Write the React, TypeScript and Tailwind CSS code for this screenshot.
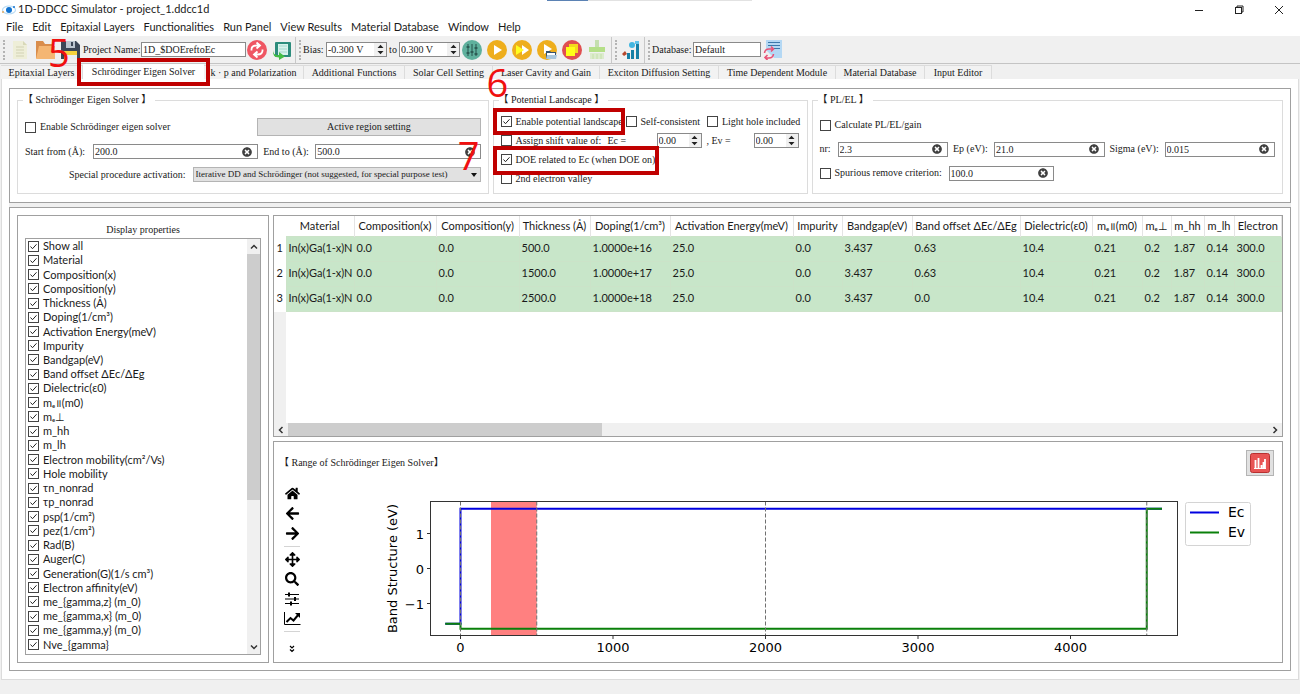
import { ReactNode } from "react";
import {
  FaArrowLeft,
  FaArrowRight,
  FaArrowsAlt,
  FaHome,
  FaSearch,
  FaTimesCircle,
} from "react-icons/fa";

const serif = "font-['Liberation_Serif','Noto_Sans_CJK_TC',serif]";

const menus = [
  "File",
  "Edit",
  "Epitaxial Layers",
  "Functionalities",
  "Run Panel",
  "View Results",
  "Material Database",
  "Window",
  "Help",
];

const properties = [
  "Show all",
  "Material",
  "Composition(x)",
  "Composition(y)",
  "Thickness (Å)",
  "Doping(1/cm³)",
  "Activation Energy(meV)",
  "Impurity",
  "Bandgap(eV)",
  "Band offset ΔEc/ΔEg",
  "Dielectric(ε0)",
  "mₑ॥(m0)",
  "mₑ⊥",
  "m_hh",
  "m_lh",
  "Electron mobility(cm²/Vs)",
  "Hole mobility",
  "τn_nonrad",
  "τp_nonrad",
  "psp(1/cm²)",
  "pez(1/cm²)",
  "Rad(B)",
  "Auger(C)",
  "Generation(G)(1/s cm³)",
  "Electron affinity(eV)",
  "me_{gamma,z} (m_0)",
  "me_{gamma,x} (m_0)",
  "me_{gamma,y} (m_0)",
  "Nve_{gamma}",
];

const columns = [
  { label: "Material", width: "w-[68px]" },
  { label: "Composition(x)", width: "w-[82px]" },
  { label: "Composition(y)", width: "w-[83px]" },
  { label: "Thickness (Å)", width: "w-[71px]" },
  { label: "Doping(1/cm³)", width: "w-[80px]" },
  { label: "Activation Energy(meV)", width: "w-[123px]" },
  { label: "Impurity", width: "w-[49px]" },
  { label: "Bandgap(eV)", width: "w-[70px]" },
  { label: "Band offset ΔEc/ΔEg", width: "w-[108px]" },
  { label: "Dielectric(ε0)", width: "w-[72px]" },
  { label: "mₑ॥(m0)", width: "w-[50px]" },
  { label: "mₑ⊥", width: "w-[29px]" },
  { label: "m_hh", width: "w-[33px]" },
  { label: "m_lh", width: "w-[30px]" },
  { label: "Electron", width: "" },
];

const rows = [
  ["In(x)Ga(1-x)N", "0.0", "0.0", "500.0", "1.0000e+16", "25.0", "0.0", "3.437", "0.63", "10.4", "0.21", "0.2", "1.87", "0.14", "300.0"],
  ["In(x)Ga(1-x)N", "0.0", "0.0", "1500.0", "1.0000e+17", "25.0", "0.0", "3.437", "0.63", "10.4", "0.21", "0.2", "1.87", "0.14", "300.0"],
  ["In(x)Ga(1-x)N", "0.0", "0.0", "2500.0", "1.0000e+18", "25.0", "0.0", "3.437", "0.0", "10.4", "0.21", "0.2", "1.87", "0.14", "300.0"],
];

function Check({ label, checked = false }: { label: string; checked?: boolean }) {
  return (
    <label className="flex items-center gap-1 whitespace-nowrap">
      <span className="relative flex h-[11px] w-[11px] shrink-0">
        <input
          type="checkbox"
          defaultChecked={checked}
          className="peer h-[11px] w-[11px] appearance-none border border-[#444] bg-white"
        />
        <svg
          viewBox="0 0 11 11"
          className="pointer-events-none absolute inset-0 hidden peer-checked:block"
          fill="none"
          stroke="#222"
        >
          <path d="M2.5 5.5l2 2.2 4-4.4" />
        </svg>
      </span>
      {label}
    </label>
  );
}

function ClearField({ id, value, className }: { id: string; value: string; className: string }) {
  return (
    <span className={`flex h-[15px] items-center border border-[#8a8a8a] bg-white pr-[5px] ${className}`}>
      <input id={id} defaultValue={value} className="h-full w-full min-w-0 pl-px outline-none" />
      <button aria-label="Clear" className="shrink-0 text-[#404040]">
        <FaTimesCircle size={10} />
      </button>
    </span>
  );
}

function Spin({ value, label, className }: { value: string; label: string; className: string }) {
  return (
    <span className={`flex h-[15px] border border-[#8a8a8a] bg-white ${className}`}>
      <input aria-label={label} defaultValue={value} className="h-full w-full min-w-0 pl-px outline-none" />
      <button aria-label={`Step ${label}`} className="flex w-3 shrink-0 items-center justify-center bg-[#f0f0f0]">
        <svg width="7" height="11" viewBox="0 0 7 11" fill="#222">
          <path d="M0.5 4L3.5 0.8 6.5 4zM0.5 7L3.5 10.2 6.5 7z" />
        </svg>
      </button>
    </span>
  );
}

function Grip() {
  return <span className="h-5 w-0 shrink-0 border-l-2 border-dotted border-[#b4b4b4]" />;
}

function Divider() {
  return <span className="h-[26px] w-px shrink-0 bg-[#c8c8c8]" />;
}

function ToolButton({ label, children }: { label: string; children: ReactNode }) {
  return (
    <button aria-label={label} className="h-5 w-5 shrink-0">
      <svg width="20" height="20" viewBox="0 0 20 20">
        {children}
      </svg>
    </button>
  );
}

function Mark({ className }: { className: string }) {
  return <span className={`pointer-events-none absolute z-10 border-4 border-[#c00000] ${className}`} />;
}

function Digit({ value, className }: { value: string; className: string }) {
  return (
    <span
      className={`pointer-events-none absolute z-20 font-['Open_Sans',sans-serif] text-[38px] leading-[38px] text-[#f01010] ${className}`}
    >
      {value}
    </span>
  );
}

function TitleBar() {
  return (
    <header className="relative flex h-[19px] items-center bg-white pl-px text-[11px] text-[#222]">
      <svg width="16" height="14" viewBox="0 0 16 14" className="mr-px">
        <ellipse cx="8" cy="7" rx="6.5" ry="4" fill="none" stroke="#b9dcf5" strokeWidth="1.2" />
        <circle cx="8" cy="7" r="3" fill="#1273d0" />
        <circle cx="13" cy="4" r="1" fill="#1273d0" />
        <circle cx="2" cy="9" r="1" fill="#e0a860" />
      </svg>
      <h1>1D-DDCC Simulator - project_1.ddcc1d</h1>
      <span className="absolute left-[547px] top-0 flex">
        <span className="h-px w-[41px] bg-[#5b82b4]" />
        <span className="h-px w-[164px] bg-[#e2e2e2]" />
      </span>
      <div className="ml-auto flex gap-[30px] pr-4">
        <button aria-label="Minimize">
          <svg width="10" height="10" viewBox="0 0 10 10" fill="none" stroke="#222">
            <path d="M1 5.5h8" />
          </svg>
        </button>
        <button aria-label="Restore">
          <svg width="10" height="10" viewBox="0 0 10 10" fill="none" stroke="#222">
            <rect x="1.5" y="2.5" width="6" height="6" />
            <path d="M3 2.5v-1.5h6v6h-1.5" />
          </svg>
        </button>
        <button aria-label="Close">
          <svg width="10" height="10" viewBox="0 0 10 10" fill="none" stroke="#222">
            <path d="M1 1l8 8M9 1l-8 8" />
          </svg>
        </button>
      </div>
    </header>
  );
}

function Toolbar() {
  return (
    <div className={`flex h-7 items-center border-b border-[#c4c4c4] pl-[3px] text-[10px] ${serif}`}>
      <Grip />
      <div className="ml-[5px] flex items-center gap-[5px]">
        <ToolButton label="New project">
          <path d="M3 1h10l4 4v14H3z" fill="#eeeed8" />
          <path d="M13 1v4h4z" fill="#d8d8b8" />
          <path d="M6 7h8M6 10h8M6 13h8M6 16h8" stroke="#d2d2b4" />
        </ToolButton>
        <ToolButton label="Open project">
          <path d="M1 1h7l2 3h9v14H1z" fill="#d98d4c" />
          <path d="M4 6h16v13H1z" fill="#f4b673" />
        </ToolButton>
        <ToolButton label="Save project">
          <path d="M1 1h15l4 4v14H1z" fill="#3c4656" />
          <path d="M6 1h9v7H6z" fill="#bcc5cf" />
          <path d="M11 2h2v4h-2z" fill="#3c4656" />
          <path d="M4 11h13v8H4z" fill="#f5d23d" />
          <path d="M4 15h13v4H4z" fill="#e9eef2" />
        </ToolButton>
      </div>
      <label htmlFor="project-name" className="ml-[3px] w-[58px] whitespace-nowrap">
        Project Name:
      </label>
      <input
        id="project-name"
        defaultValue="1D_$DOEreftoEc"
        className="h-[15px] w-[105px] border border-[#8a8a8a] bg-white pl-px"
      />
      <div className="ml-px flex items-center gap-[5px]">
        <ToolButton label="Reload">
          <circle cx="10" cy="10" r="10" fill="#ef5663" />
          <g fill="none" stroke="#fff" strokeWidth="1.8">
            <path d="M4.5 10.5q-0.5-5 5-5h3M9.5 2.5l3.5 3-3.5 3" />
            <path d="M15.5 9.5q0.5 5-5 5h-3M10.5 17.5l-3.5-3 3.5-3" />
          </g>
        </ToolButton>
        <ToolButton label="Restore layout">
          <rect x="3" y="2" width="16" height="15" rx="1" fill="#2c8c7c" />
          <rect x="6" y="4" width="10" height="11" fill="#d7f2ec" />
          <path d="M7 6h8M7 9h8M7 12h8" stroke="#a5d8ce" />
          <path d="M1 10q0 6 6 5v-3l6 4.5-6 3.5v-2.5q-7 0-6-7.5z" fill="#45bd45" />
        </ToolButton>
      </div>
      <div className="ml-[3px] flex items-center gap-[3px]">
        <Divider />
        <Grip />
      </div>
      <span className="w-[25px] pl-[2px]">Bias:</span>
      <Spin label="bias from" value="-0.300 V" className="w-[61px]" />
      <span className="w-3 text-center">to</span>
      <Spin label="bias to" value="0.300 V" className="w-[61px]" />
      <div className="ml-[2px] flex items-center gap-[5px]">
        <ToolButton label="Bias settings">
          <circle cx="10" cy="10" r="10" fill="#5fb09d" />
          <path d="M6 4v12M10 4v12M14 4v12" stroke="#27504b" />
          <path d="M4.5 7h3M8.5 12h3M12.5 8h3M4.5 13h3M12.5 14h3" stroke="#27504b" strokeWidth="1.5" />
        </ToolButton>
        <ToolButton label="Run">
          <circle cx="10" cy="10" r="10" fill="#eeae1c" />
          <path d="M7 5l8 5-8 5z" fill="#fff" />
        </ToolButton>
        <ToolButton label="Run all">
          <circle cx="10" cy="10" r="10" fill="#eeae1c" />
          <path d="M10 5l7 5-7 5z" fill="#fff" />
          <path d="M4 5l8 5-8 5z" fill="#ffff20" />
        </ToolButton>
        <ToolButton label="Run from file">
          <circle cx="10" cy="10" r="10" fill="#eeae1c" />
          <path d="M7 4l8 5-8 5z" fill="#fff" />
          <path d="M9 11h4l1 1h5v7H9z" fill="#35536f" />
          <path d="M10 13h8v2h-8z" fill="#fff" />
          <path d="M10 15h10l-1 4H9z" fill="#a9c6dc" />
        </ToolButton>
        <ToolButton label="Stop">
          <circle cx="10" cy="10" r="10" fill="#e04f50" />
          <path d="M7 4h9v9H7z" fill="#f4d91c" />
          <path d="M4 7h9v9H4z" fill="#ffff18" />
        </ToolButton>
        <ToolButton label="Clean">
          <path d="M8 0h4v8H8z" fill="#c5dfae" />
          <path d="M2 7h16v5H2z" fill="#b5df88" />
          <path d="M3 13h14v6H3z" fill="#dcebcd" />
          <path d="M6 14v5M10 14v5M14 14v5" stroke="#c4e0a8" />
        </ToolButton>
      </div>
      <div className="ml-1 flex items-center gap-[3px]">
        <Divider />
        <Grip />
      </div>
      <div className="ml-1 flex items-center gap-[3px]">
        <ToolButton label="Plot results">
          <path d="M6 13h3v6H6zM10 10h3v9h-3zM15 4h3v15h-3z" fill="#1680a6" />
          <circle cx="11" cy="5" r="3" fill="#42b6e0" />
          <path d="M1 14l3-3 2 3-3 2z" fill="#b5482d" />
          <path d="M14 1h4v3h-4z" fill="#5fc4ea" />
        </ToolButton>
        <Divider />
        <Grip />
      </div>
      <label htmlFor="database" className="ml-[2px] w-[41px] whitespace-nowrap">
        Database:
      </label>
      <input
        id="database"
        defaultValue="Default"
        className="mr-[2px] h-[15px] w-[68px] border border-[#8a8a8a] bg-white pl-px"
      />
      <ToolButton label="Reload database">
        <path d="M3 0h16v18h-8l-8-8z" fill="#b4d8f4" />
        <path d="M5 2.5h12M5 5.5h12M11 8.5h6" stroke="#3b78aa" strokeWidth="1.2" />
        <g fill="none" stroke="#e85276" strokeWidth="1.6">
          <path d="M1.5 13q0.5-4 4.5-4h4M8 6.5l2.5 2.5-2.5 2.5" />
          <path d="M10.5 14q-0.5 4-4.5 4h-4M4.5 20l-2.500-2.500 2.500-2.500" />
        </g>
      </ToolButton>
    </div>
  );
}

function Tab({ label, width }: { label: string; width: string }) {
  return (
    <button className={`h-[14px] shrink-0 whitespace-nowrap border-r border-t border-[#dcdcdc] bg-[#f2f2f2] text-center ${width}`}>
      {label}
    </button>
  );
}

function Tabs() {
  return (
    <nav className={`flex h-[15px] items-end pl-px text-[10px] leading-[13px] ${serif}`}>
      <Tab label="Epitaxial Layers" width="w-[82px]" />
      <div className="relative flex shrink-0">
        <button className="h-[15px] w-[121px] whitespace-nowrap bg-white text-center">Schrödinger Eigen Solver</button>
        <Mark className="-left-[6px] -right-[6px] -top-[6px] h-[28px]" />
        <Digit value="5" className="-left-[35px] -top-[31px]" />
      </div>
      <Tab label="k · p and Polarization" width="w-[100px]" />
      <Tab label="Additional Functions" width="w-[101px]" />
      <Tab label="Solar Cell Setting" width="w-[88px]" />
      <Tab label="Laser Cavity and Gain" width="w-[107px]" />
      <Tab label="Exciton Diffusion Setting" width="w-[119px]" />
      <Tab label="Time Dependent Module" width="w-[117px]" />
      <Tab label="Material Database" width="w-[89px]" />
      <Tab label="Input Editor" width="w-[67px]" />
    </nav>
  );
}

function Group({ title, className, children }: { title: string; className: string; children: ReactNode }) {
  return (
    <fieldset className={`relative min-w-0 border border-[#dcdcdc] px-[7px] pb-[5px] ${className}`}>
      <legend className="-ml-[2px] h-[14px] whitespace-pre pr-1 leading-[14px]">{title}</legend>
      {children}
    </fieldset>
  );
}

function SolverSettings() {
  return (
    <section className={`flex gap-1 border border-[#a0a0a0] bg-white px-[7px] pb-2 pt-1 text-[10px] leading-[14px] ${serif}`}>
      <Group title="【 Schrödinger Eigen Solver 】" className="flex-1">
        <div className="flex flex-col gap-2 pt-[11px]">
          <div className="flex items-center justify-between">
            <Check label="Enable Schrödinger eigen solver" />
            <button className="h-[18px] w-[49%] border border-[#b4b4b4] bg-[#e1e1e1]">Active region setting</button>
          </div>
          <div className="flex items-center gap-[5px]">
            <label htmlFor="start" className="w-[63px] whitespace-nowrap">Start from (Å):</label>
            <ClearField id="start" value="200.0" className="flex-1" />
            <label htmlFor="end" className="w-[47px] whitespace-nowrap">End to (Å):</label>
            <ClearField id="end" value="500.0" className="flex-1" />
          </div>
          <div className="flex items-center justify-end gap-[7px]">
            <label htmlFor="procedure">Special procedure activation:</label>
            <span className="relative flex">
              <select
                id="procedure"
                className="h-[15px] w-[288px] appearance-none border border-[#b4b4b4] bg-[#e1e1e1] pl-[2px] text-[9px] leading-[13px]"
              >
                <option>Iterative DD and Schrödinger (not suggested, for special purpose test)</option>
              </select>
              <svg viewBox="0 0 6 4" className="pointer-events-none absolute right-[4px] top-[6px] h-1 w-[6px]">
                <path d="M0 0h6L3 4z" fill="#111" />
              </svg>
            </span>
          </div>
        </div>
        <Digit value="7" className="right-[8px] top-[29px]" />
      </Group>

      <Group title="【 Potential Landscape 】" className="w-[315px] shrink-0">
        <div className="flex flex-col pt-[5px]">
          <div className="flex h-[19px] items-center gap-[7px]">
            <span className="relative w-[118px]">
              <Check label="Enable potential landscape" checked />
              <Mark className="-left-[8px] -right-[6px] -top-[7px] h-[27px]" />
            </span>
            <Check label="Self-consistent" />
            <Check label="Light hole included" />
          </div>
          <div className="flex h-[19px] items-center">
            <span className="w-[107px]">
              <Check label="Assign shift value of:" />
            </span>
            <span className="w-[49px]">Ec =</span>
            <Spin label="Ec shift" value="0.00" className="w-[45px]" />
            <span className="w-[52px] pl-[5px]">, Ev =</span>
            <Spin label="Ev shift" value="0.00" className="w-[45px]" />
          </div>
          <div className="flex h-[19px] items-center">
            <span className="relative w-[152px]">
              <Check label="DOE related to Ec (when DOE on)" checked />
              <Mark className="-left-[8px] -right-[6px] -top-[7px] h-[29px]" />
            </span>
          </div>
          <div className="flex h-[19px] items-center">
            <Check label="2nd electron valley" />
          </div>
        </div>
        <Digit value="6" className="-left-[7px] -top-[44px]" />
      </Group>

      <Group title="【 PL/EL 】" className="flex-1">
        <div className="flex flex-col pt-[6px]">
          <div className="flex h-6 items-center">
            <Check label="Calculate PL/EL/gain" />
          </div>
          <div className="flex h-6 items-center gap-[5px]">
            <label htmlFor="nr" className="w-[13px]">nr:</label>
            <ClearField id="nr" value="2.3" className="flex-1" />
            <label htmlFor="ep" className="w-[36px] whitespace-nowrap">Ep (eV):</label>
            <ClearField id="ep" value="21.0" className="flex-1" />
            <label htmlFor="sigma" className="w-[50px] whitespace-nowrap">Sigma (eV):</label>
            <ClearField id="sigma" value="0.015" className="flex-1" />
          </div>
          <div className="flex h-6 items-center">
            <span className="w-[129px]">
              <Check label="Spurious remove criterion:" />
            </span>
            <ClearField id="spurious" value="100.0" className="w-[105px]" />
          </div>
        </div>
      </Group>
    </section>
  );
}

function PropertyList() {
  return (
    <aside className="flex w-[252px] shrink-0 flex-col border border-[#a0a0a0] px-[7px] pb-[7px]">
      <h2 className={`pb-px pt-[6px] text-center text-[10px] leading-[15px] ${serif}`}>Display properties</h2>
      <div className="flex flex-1 border border-[#a0a0a0]">
        <ul className="flex flex-1 flex-col pb-[2px] pl-[2px] text-[11px] leading-[14px]">
          {properties.map((name) => (
            <li key={name} className="flex flex-1 items-center">
              <Check label={name} checked />
            </li>
          ))}
        </ul>
        <div className="flex w-[13px] flex-col items-center bg-[#f0f0f0]">
          <button aria-label="Scroll up" className="flex h-[15px] items-center">
            <svg width="8" height="8" viewBox="0 0 8 8" fill="none" stroke="#333" strokeWidth="1.5">
              <path d="M1 5.5l3-3 3 3" />
            </svg>
          </button>
          <div className="flex w-full flex-1 flex-col">
            <div className="h-[64%] bg-[#cdcdcd]" />
          </div>
          <button aria-label="Scroll down" className="flex h-[15px] items-center">
            <svg width="8" height="8" viewBox="0 0 8 8" fill="none" stroke="#333" strokeWidth="1.5">
              <path d="M1 2.5l3 3 3-3" />
            </svg>
          </button>
        </div>
      </div>
    </aside>
  );
}

function LayerTable() {
  return (
    <section className="flex flex-1 basis-0 flex-col overflow-hidden border border-[#a0a0a0] text-[11px]">
      <table className="w-full table-fixed border-collapse">
        <thead>
          <tr className="h-5">
            <th className="w-3" />
            {columns.map((c) => (
              <th
                key={c.label}
                className={`overflow-hidden whitespace-nowrap border-r border-[#e4e4e4] p-0 text-center font-normal ${c.width}`}
              >
                {c.label}
              </th>
            ))}
          </tr>
        </thead>
        <tbody>
          {rows.map((row, i) => (
            <tr key={i} className="h-[25px]">
              <th className="p-0 text-center font-normal">{i + 1}</th>
              {row.map((cell, j) => (
                <td key={j} className="whitespace-nowrap border border-[#cbe3c8] bg-[#c8e6c9] p-0 pl-[2px]">
                  {cell}
                </td>
              ))}
            </tr>
          ))}
        </tbody>
      </table>
      <div className="w-3 flex-1 bg-[#f0f0f0]" />
      <div className="flex h-[13px] items-center bg-[#f0f0f0]">
        <button aria-label="Scroll left" className="flex w-[14px] justify-center">
          <svg width="8" height="8" viewBox="0 0 8 8" fill="none" stroke="#333" strokeWidth="1.5">
            <path d="M5.5 1l-3 3 3 3" />
          </svg>
        </button>
        <div className="flex h-full flex-1">
          <div className="w-[32%] bg-[#cdcdcd]" />
        </div>
        <button aria-label="Scroll right" className="flex w-[14px] justify-center">
          <svg width="8" height="8" viewBox="0 0 8 8" fill="none" stroke="#333" strokeWidth="1.5">
            <path d="M2.5 1l3 3-3 3" />
          </svg>
        </button>
      </div>
    </section>
  );
}

const px = (nm: number) => 149.5 + nm * 0.1525;
const py = (ev: number) => 84.5 - ev * 35;

function line(points: number[][]) {
  return points.map(([x, y]) => `${px(x)},${py(y)}`).join(" ");
}

function BandPlot() {
  return (
    <svg viewBox="0 0 970 177" className="h-[177px] min-w-0 flex-1 font-['DejaVu_Sans',sans-serif]" fontSize="13">
      <rect x={px(200)} y="17.5" width={px(500) - px(200)} height="134" fill="#ff8080" />
      <polyline points={line([[-100, -1.58], [0, -1.58], [0, 1.71], [4500, 1.71], [4600, 1.71]])} fill="none" stroke="#0000e0" strokeWidth="2" />
      <polyline points={line([[-100, -1.58], [0, -1.58], [0, -1.72], [4500, -1.72], [4500, 1.71], [4600, 1.71]])} fill="none" stroke="#0a800a" strokeWidth="2" />
      {[0, 500, 2000, 4500].map((x) => (
        <path key={x} d={`M${px(x)} 17.5V151.5`} stroke="#707070" strokeDasharray="4 2" />
      ))}
      <rect x="119.5" y="17.5" width="747" height="134" fill="none" stroke="#333" />
      {[0, 1000, 2000, 3000, 4000].map((x) => (
        <g key={x}>
          <path d={`M${px(x)} 152v3`} stroke="#333" />
          <text x={px(x)} y="168" textAnchor="middle">{x}</text>
        </g>
      ))}
      {[1, 0, -1].map((y) => (
        <g key={y}>
          <path d={`M116 ${py(y)}h3`} stroke="#333" />
          <text x="113" y={py(y) + 5} textAnchor="end">{y < 0 ? `−${-y}` : y}</text>
        </g>
      ))}
      <text transform="translate(86 84.5) rotate(-90)" textAnchor="middle">Band Structure (eV)</text>
      <rect x="874.5" y="18.5" width="65" height="43" rx="2" fill="#fff" stroke="#d4d4d4" />
      <path d="M879 28.5h29" stroke="#0000e0" strokeWidth="2" />
      <path d="M879 48.5h29" stroke="#0a800a" strokeWidth="2" />
      <g fontSize="14">
        <text x="917" y="33">Ec</text>
        <text x="917" y="53">Ev</text>
      </g>
    </svg>
  );
}

function PlotPanel() {
  return (
    <section className="flex flex-1 basis-0 flex-col border border-[#a0a0a0]">
      <div className="flex h-[42px] items-start justify-between pl-[5px] pr-[8px] pt-2">
        <h2 className={`pt-[6px] text-[10px] leading-[14px] ${serif}`}>【 Range of Schrödinger Eigen Solver】</h2>
        <button aria-label="Show plot" className="flex h-[26px] w-[28px] items-center justify-center border border-[#b4b4b4] bg-[#e1e1e1]">
          <svg width="20" height="20" viewBox="0 0 20 20">
            <rect x="0.5" y="0.5" width="19" height="19" rx="2" fill="#e85454" stroke="#b83030" />
            <path d="M5.5 7v8M8.5 5v10M11.5 12v3M15 6v9M13.500 9v6" stroke="#fff" strokeWidth="1.8" />
            <path d="M4 15.5h12" stroke="#fff" />
          </svg>
        </button>
      </div>
      <div className="flex flex-1">
        <div className="flex w-9 flex-col items-center gap-[5px] pt-[2px] text-black">
          <button aria-label="Home"><FaHome size={15} /></button>
          <button aria-label="Back"><FaArrowLeft size={15} /></button>
          <button aria-label="Forward"><FaArrowRight size={15} /></button>
          <hr className="w-4 border-[#d4d4d4]" />
          <button aria-label="Pan"><FaArrowsAlt size={15} /></button>
          <button aria-label="Zoom"><FaSearch size={14} /></button>
          <button aria-label="Configure subplots">
            <svg width="14" height="16" viewBox="0 0 14 16" stroke="#000">
              <path d="M0 3.5h14M0 8h14M0 12.5h14" strokeWidth="1.2" />
              <path d="M4 1.5v4M10 6v4M6 10.5v4" strokeWidth="2" />
            </svg>
          </button>
          <button aria-label="Edit axis">
            <svg width="17" height="14" viewBox="0 0 17 14" fill="none" stroke="#000">
              <path d="M0.5 0v12.5h16" />
              <path d="M2.5 10l4-4 3 2.5 5-6" strokeWidth="2" />
              <path d="M11 1h5v5z" fill="#000" stroke="none" />
            </svg>
          </button>
          <hr className="w-4 border-[#d4d4d4]" />
          <button aria-label="More tools" className="pt-2">
            <svg width="6" height="8" viewBox="0 0 6 8" fill="none" stroke="#000" strokeWidth="1.2">
              <path d="M1 1l2 2 2-2M1 4.5l2 2 2-2" />
            </svg>
          </button>
        </div>
        <BandPlot />
      </div>
    </section>
  );
}

export default function App() {
  return (
    <div className="flex min-h-screen flex-col overflow-hidden bg-[#f0f0f0] font-['Lato','Open_Sans','Noto_Sans',sans-serif] text-[#1a1a1a]">
      <TitleBar />
      <nav className="flex h-[17px] items-center gap-[9px] bg-white pl-[6px] text-[11px]">
        {menus.map((m) => (
          <button key={m} className="whitespace-nowrap">{m}</button>
        ))}
      </nav>
      <Toolbar />
      <Tabs />
      <main className="mx-px flex flex-1 flex-col border-x border-b border-[#dcdcdc] bg-white px-[7px] pb-2 pt-[9px]">
        <SolverSettings />
        <div className="h-1 shrink-0 bg-[#f0f0f0]" />
        <div className="flex flex-1 gap-1 border border-[#a0a0a0] p-[7px]">
          <PropertyList />
          <div className="flex min-w-0 flex-1 flex-col gap-1">
            <LayerTable />
            <PlotPanel />
          </div>
        </div>
      </main>
      <footer className="h-[14px] shrink-0" />
    </div>
  );
}
